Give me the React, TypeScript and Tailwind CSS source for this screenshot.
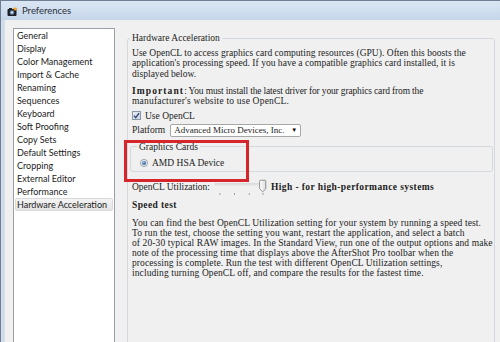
import React from 'react';

const sections = [
  'General',
  'Display',
  'Color Management',
  'Import & Cache',
  'Renaming',
  'Sequences',
  'Keyboard',
  'Soft Proofing',
  'Copy Sets',
  'Default Settings',
  'Cropping',
  'External Editor',
  'Performance',
  'Hardware Acceleration',
];

function AppIcon() {
  return (
    <svg width="11" height="11" viewBox="0 0 11 11">
      <rect x="0.5" y="3" width="9" height="7" rx="1" fill="#1d2026" />
      <rect x="2" y="2" width="3" height="1.5" fill="#1d2026" />
      <circle cx="5" cy="6.5" r="2.2" fill="#6f8fb5" />
      <circle cx="5" cy="6.5" r="1.1" fill="#d9e4f0" />
      <path d="M7.5 0.5 L8.6 2 L10.5 2.2 L9 3.4 L9.4 5 L7.8 4.1 L6.6 5 L7 3.4 L5.8 2.2 L7.4 2 Z" fill="#f3a21f" />
    </svg>
  );
}

function CheckBox() {
  return (
    <svg width="9" height="9" viewBox="0 0 9 9">
      <defs>
        <linearGradient id="cb" x1="0" y1="0" x2="1" y2="1">
          <stop offset="0%" stopColor="#e9eef4" />
          <stop offset="100%" stopColor="#c9d4e0" />
        </linearGradient>
      </defs>
      <rect x="0.5" y="0.5" width="8" height="8" fill="url(#cb)" stroke="#8b98a8" />
      <path d="M2 4.6 L3.7 6.6 L7.1 2.1" fill="none" stroke="#2f4470" strokeWidth="1.3" />
    </svg>
  );
}

function Radio() {
  return (
    <svg width="8" height="8" viewBox="0 0 8 8">
      <defs>
        <radialGradient id="rd" cx="0.4" cy="0.35" r="0.7">
          <stop offset="0%" stopColor="#8fc0ea" />
          <stop offset="100%" stopColor="#1f4f82" />
        </radialGradient>
      </defs>
      <circle cx="4" cy="4" r="3.6" fill="#e6ebf0" stroke="#8e969f" strokeWidth="0.8" />
      <circle cx="4" cy="4" r="2" fill="url(#rd)" />
    </svg>
  );
}

function Slider() {
  return (
    <svg width="52" height="16" viewBox="0 0 52 16">
      <defs>
        <linearGradient id="th" x1="0" y1="0" x2="1" y2="0">
          <stop offset="0%" stopColor="#ffffff" />
          <stop offset="100%" stopColor="#dcdcdc" />
        </linearGradient>
      </defs>
      <rect x="0" y="4.5" width="48" height="1.5" fill="#e9e9e9" stroke="#c9c9c9" strokeWidth="0.5" />
      <rect x="4.5" y="14" width="0.8" height="2" fill="#8a8a8a" />
      <rect x="19" y="14" width="0.8" height="2" fill="#8a8a8a" />
      <rect x="33.8" y="14" width="0.8" height="2" fill="#8a8a8a" />
      <rect x="47.6" y="14" width="0.8" height="2" fill="#8a8a8a" />
      <path d="M44.6 2.2 Q44.6 1.2 45.6 1.2 L49.8 1.2 Q50.8 1.2 50.8 2.2 L50.8 9.8 L47.7 12.8 L44.6 9.8 Z" fill="url(#th)" stroke="#7b7b7b" strokeWidth="0.8" />
    </svg>
  );
}

export default function App() {
  return (
    <div className="relative w-[500px] h-[342px] overflow-hidden flex flex-col border-t border-l border-[#6f7e92] bg-[#d0dcea]">
      {/* title bar */}
      <div className="h-[19px] shrink-0 flex items-start gap-[4px] pl-[6px] pt-[5px] bg-linear-to-b from-[#dbe6f3] to-[#c5d6ea]">
        <AppIcon />
        <span className="text-[9.5px] leading-[12px] -mt-[1px] text-[#2a2f38] font-['Lato','Noto_Sans',sans-serif]">Preferences</span>
      </div>

      {/* client area */}
      <div className="flex-1 min-h-0 flex items-start ml-[4px] bg-[#f0f0f0]">
        {/* section list */}
        <div className="ml-[8px] mt-[8px] w-[102px] h-[400px] shrink-0 border border-[#9aa0a8] bg-white font-['Lato','Noto_Sans',sans-serif] text-[9px] text-[#1b1b1b]">
          {sections.map((s, i) => (
            <div
              key={s}
              className={
                i === sections.length - 1
                  ? 'mx-[1px] h-[13px] leading-[11px] pl-[1px] border border-[#d9d9d9] rounded-[2px] bg-linear-to-b from-[#f4f4f4] to-[#e4e4e4] whitespace-nowrap'
                  : 'mx-[1px] h-[13px] leading-[11px] pl-[1px] border border-transparent whitespace-nowrap'
              }
            >
              {s}
            </div>
          ))}
        </div>

        {/* Hardware Acceleration group */}
        <fieldset className="ml-[12px] mr-[5px] mt-[13px] flex-1 min-w-0 h-[400px] border border-[#d3d9df] rounded-[3px] pl-[4px] pr-[1px] text-[#1c1c1c] text-[9.5px] font-['Liberation_Serif','Times_New_Roman',serif]">
          <legend className="-ml-[2px] px-[2px] leading-[10px] whitespace-nowrap">Hardware Acceleration</legend>

          <div className="mt-[5px] leading-[10.3px] whitespace-nowrap tracking-[0.03px]">
            <p>Use OpenCL to access graphics card computing resources (GPU). Often this boosts the</p>
            <p>application's processing speed. If you have a compatible graphics card installed, it is</p>
            <p>displayed below.</p>
          </div>

          <div className="mt-[7px] leading-[10.3px] whitespace-nowrap tracking-[-0.15px]">
            <p>
              <b className="tracking-[1.1px]">Important</b>: You must install the latest driver for your graphics card from the
            </p>
            <p className="tracking-[0.2px]">manufacturer's website to use OpenCL.</p>
          </div>

          <label className="mt-[3.5px] h-[12px] flex items-center gap-[4px] whitespace-nowrap">
            <CheckBox />
            <span>Use OpenCL</span>
          </label>

          <div className="mt-[2px] h-[13px] flex items-center gap-[5px] whitespace-nowrap">
            <span>Platform</span>
            <div className="w-[131px] h-[13px] flex items-center justify-between pl-[3px] pr-[3px] bg-white border border-[#a7a7a7] rounded-[2px] text-[9px]">
              <span className="leading-[11px]">Advanced Micro Devices, Inc.</span>
              <span className="text-[6px] leading-[11px] text-black">▼</span>
            </div>
          </div>

          <fieldset className="mt-[4.7px] -ml-[2px] border border-[#d3d9df] rounded-[3px] pl-[6px] pb-[2.5px] min-w-0">
            <legend className="px-[2px] leading-[10px] whitespace-nowrap">Graphics Cards</legend>
            <div className="mt-[5px] pl-[3px] h-[12px] flex items-center gap-[4px] whitespace-nowrap">
              <Radio />
              <span>AMD HSA Device</span>
            </div>
          </fieldset>

          <div className="mt-[6.5px] h-[16px] flex items-center whitespace-nowrap">
            <span>OpenCL Utilization:</span>
            <span className="ml-[5px] flex"><Slider /></span>
            <b className="ml-[4px] tracking-[0.4px]">High - for high-performance systems</b>
          </div>

          <p className="mt-[5.5px] leading-[10.3px] font-bold tracking-[0.4px]">Speed test</p>

          <div className="mt-[7.5px] leading-[10px] whitespace-nowrap tracking-[0.1px]">
            <p>You can find the best OpenCL Utilization setting for your system by running a speed test.</p>
            <p>To run the test, choose the setting you want, restart the application, and select a batch</p>
            <p>of 20-30 typical RAW images. In the Standard View, run one of the output options and make</p>
            <p>note of the processing time that displays above the AfterShot Pro toolbar when the</p>
            <p>processing is complete. Run the test with different OpenCL Utilization settings,</p>
            <p>including turning OpenCL off, and compare the results for the fastest time.</p>
          </div>
        </fieldset>
      </div>

      {/* red annotation box */}
      <div className="absolute left-[123px] top-[139px] w-[125px] h-[42px] border-[3px] border-[#d6262c]" />
    </div>
  );
}
